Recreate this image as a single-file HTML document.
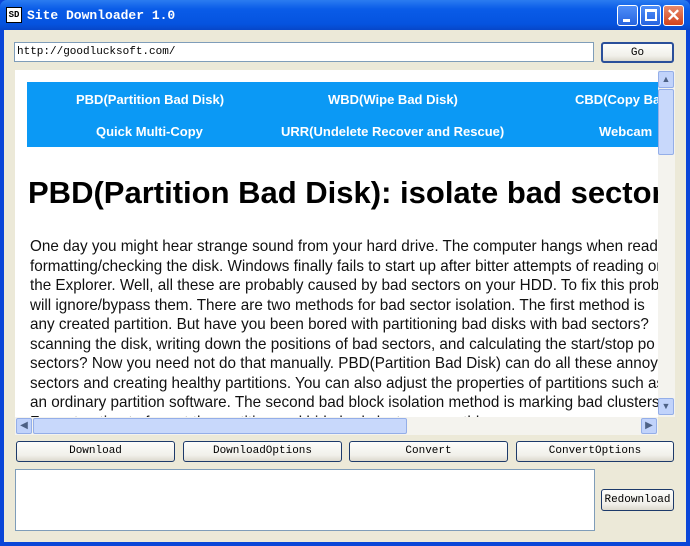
<!DOCTYPE html>
<html><head><style>
*{margin:0;padding:0;box-sizing:border-box}
body{width:690px;height:546px;overflow:hidden;background:#0a46d8;font-family:"Liberation Sans",sans-serif;position:relative}
.abs{position:absolute}
#title{left:0;top:0;width:690px;height:30px;background:linear-gradient(#2b7cf0,#0a5ce8 30%,#0553df 80%,#0646c8);border-radius:7px 7px 0 0}
#client{left:4px;top:30px;width:682px;height:512px;background:#ece9d8}
.mono{font-family:"Liberation Mono","Noto Sans CJK SC",monospace}
.btn{position:absolute;background:linear-gradient(#fdfdfb,#f1f0ea 70%,#dcd9ce);border:1px solid #1d3a6a;border-radius:3px;font-size:11px;text-align:center;font-family:"Liberation Mono",monospace;color:#000}
.nav{color:#fff;font-weight:bold;font-size:13px;position:absolute;white-space:nowrap}
.p{position:absolute;left:15px;font-size:15.25px;white-space:nowrap;color:#111}
.cap{position:absolute;width:21px;height:21px;top:5px;border:1px solid #fff;border-radius:3px;background:linear-gradient(#4f8ef8,#2764e0)}
</style></head><body>
<div id="title" class="abs">
 <div class="abs" style="left:6px;top:7px;width:16px;height:16px;background:#fff;border:1px solid #000;font:bold 9px 'Liberation Mono',monospace;line-height:14px;text-align:center">SD</div>
 <div class="abs mono" style="left:27px;top:8px;color:#fff;font-size:13px;font-weight:bold">Site Downloader 1.0</div>
 <div class="cap" style="left:617px"><div class="abs" style="left:5px;top:13px;width:7px;height:3px;background:#fff"></div></div>
 <div class="cap" style="left:640px"><div class="abs" style="left:4px;top:3px;width:12px;height:12px;border:2px solid #fff;border-top-width:3px"></div></div>
 <div class="cap" style="left:663px;background:linear-gradient(#e88a6c,#d2421c);color:#fff;font:bold 17px 'Liberation Sans',sans-serif;text-align:center;line-height:19px">✕</div>
</div>
<div id="client" class="abs"></div>
<div class="abs" style="left:14px;top:42px;width:580px;height:20px;background:#fff;border:1px solid #7f9db9"><div class="mono" style="font-size:11px;padding:3px 2px">http://goodlucksoft.com/</div></div>
<div class="btn" style="left:601px;top:42px;width:73px;height:21px;line-height:19px;border:2px solid #2a4f9a">Go</div>
<!-- browser -->
<div class="abs" style="left:15px;top:70px;width:643px;height:347px;background:#fff;overflow:hidden">
 <div class="abs" style="left:12px;top:12px;width:640px;height:65px;background:#0b99f5"></div>
 <div class="nav" style="left:61px;top:22px">PBD(Partition Bad Disk)</div>
 <div class="nav" style="left:313px;top:22px">WBD(Wipe Bad Disk)</div>
 <div class="nav" style="left:560px;top:22px">CBD(Copy Bad Disk)</div>
 <div class="nav" style="left:81px;top:54px">Quick Multi-Copy</div>
 <div class="nav" style="left:266px;top:54px">URR(Undelete Recover and Rescue)</div>
 <div class="nav" style="left:584px;top:54px">Webcam</div>
 <div class="abs" style="left:13px;top:105px;font-size:31px;font-weight:bold;white-space:nowrap">PBD(Partition Bad Disk): isolate bad sectors</div>
 <div class="p" style="top:168px">One day you might hear strange sound from your hard drive. The computer hangs when reading</div>
 <div class="p" style="top:187.5px">formatting/checking the disk. Windows finally fails to start up after bitter attempts of reading or</div>
 <div class="p" style="top:207px">the Explorer. Well, all these are probably caused by bad sectors on your HDD. To fix this problem</div>
 <div class="p" style="top:226.5px">will ignore/bypass them. There are two methods for bad sector isolation. The first method is</div>
 <div class="p" style="top:246px">any created partition. But have you been bored with partitioning bad disks with bad sectors?</div>
 <div class="p" style="top:265.5px">scanning the disk, writing down the positions of bad sectors, and calculating the start/stop po</div>
 <div class="p" style="top:285px">sectors? Now you need not do that manually. PBD(Partition Bad Disk) can do all these annoy</div>
 <div class="p" style="top:304.5px">sectors and creating healthy partitions. You can also adjust the properties of partitions such as</div>
 <div class="p" style="top:324px">an ordinary partition software. The second bad block isolation method is marking bad clusters</div>
 <div class="p" style="top:343.5px">Format option to format the partition and hide bad clusters smoothly.</div>
</div>
<!-- vscroll -->
<div class="abs" style="left:658px;top:70px;width:17px;height:347px;background:#f4f3ee"></div>
<div class="abs" style="left:658px;top:71px;width:16px;height:17px;background:#c1d3fb;border:1px solid #94aee8;border-radius:2px;font-size:9px;color:#4d6185;text-align:center;line-height:14px">▲</div>
<div class="abs" style="left:658px;top:89px;width:16px;height:66px;background:#c8d8fb;border:1px solid #94aee8;border-radius:2px"></div>
<div class="abs" style="left:658px;top:398px;width:16px;height:17px;background:#c1d3fb;border:1px solid #94aee8;border-radius:2px;font-size:9px;color:#4d6185;text-align:center;line-height:14px">▼</div>
<!-- hscroll -->
<div class="abs" style="left:15px;top:417px;width:643px;height:18px;background:#f4f3ee"></div>
<div class="abs" style="left:16px;top:418px;width:16px;height:16px;background:#c1d3fb;border:1px solid #94aee8;border-radius:2px;font-size:10px;color:#4d6185;text-align:center;line-height:14px">◀</div>
<div class="abs" style="left:33px;top:418px;width:374px;height:16px;background:#c8d8fb;border:1px solid #94aee8;border-radius:2px"></div>
<div class="abs" style="left:641px;top:418px;width:16px;height:16px;background:#c1d3fb;border:1px solid #94aee8;border-radius:2px;font-size:10px;color:#4d6185;text-align:center;line-height:14px">▶</div>
<div class="btn" style="left:16px;top:441px;width:159px;height:21px;line-height:19px">Download</div>
<div class="btn" style="left:183px;top:441px;width:159px;height:21px;line-height:19px">DownloadOptions</div>
<div class="btn" style="left:349px;top:441px;width:159px;height:21px;line-height:19px">Convert</div>
<div class="btn" style="left:516px;top:441px;width:158px;height:21px;line-height:19px">ConvertOptions</div>
<div class="abs" style="left:15px;top:469px;width:580px;height:62px;background:#fff;border:1px solid #7f9db9"></div>
<div class="btn" style="left:601px;top:489px;width:73px;height:22px;line-height:20px">Redownload</div>
</body></html>
